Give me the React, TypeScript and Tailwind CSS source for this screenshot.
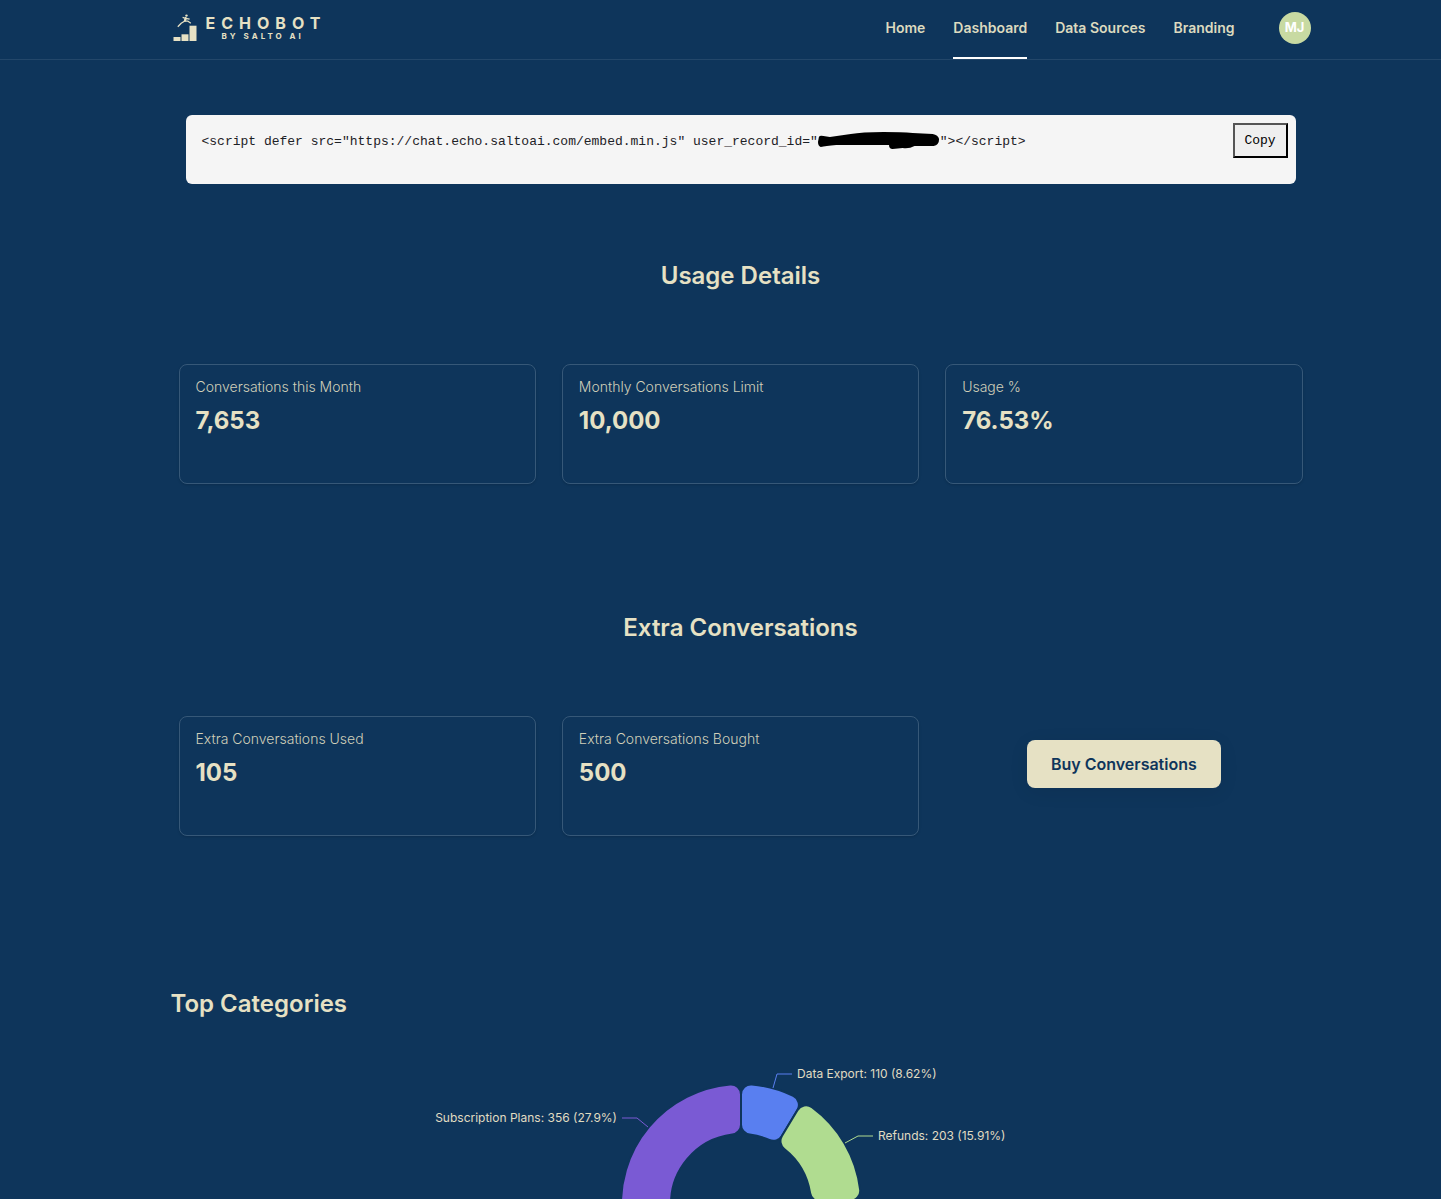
import React from "react";

type Slice = { color: string; start: number; end: number };
type Callout = {
  text: string;
  color: string;
  line: string;
  x: number;
  y: number;
  anchor: "start" | "end";
};

const OUTER = 120;
const INNER = 70;
const CORNER = 10;

const slices: Slice[] = [
  { color: "#597ff0", start: 0, end: 31.03 },
  { color: "#b0dc90", start: 31.03, end: 88.3 },
  { color: "#7a5ad4", start: 259.56, end: 360 },
];

const callouts: Callout[] = [
  { text: "Data Export: 110 (8.62%)", color: "#597ff0", line: "32,-116 36,-130 51,-130", x: 56, y: -126, anchor: "start" },
  { text: "Refunds: 203 (15.91%)", color: "#b0dc90", line: "104,-61 117,-68 132,-68", x: 137, y: -64, anchor: "start" },
  { text: "Subscription Plans: 356 (27.9%)", color: "#7a5ad4", line: "-93,-77 -104,-86 -119,-86", x: -124, y: -82, anchor: "end" },
];

function point(radius: number, angle: number) {
  return `${radius * Math.sin(angle)} ${-radius * Math.cos(angle)}`;
}

function slicePath({ start, end }: Slice) {
  const a = (start * Math.PI) / 180;
  const b = (end * Math.PI) / 180;
  const outerTurn = Math.asin(CORNER / (OUTER - CORNER));
  const innerTurn = Math.asin(CORNER / (INNER + CORNER));
  const outerSide = Math.sqrt((OUTER - CORNER) ** 2 - CORNER ** 2);
  const innerSide = Math.sqrt((INNER + CORNER) ** 2 - CORNER ** 2);
  const corner = `A${CORNER} ${CORNER} 0 0 1`;
  return [
    `M${point(innerSide, a)}`,
    `L${point(outerSide, a)}`,
    `${corner} ${point(OUTER, a + outerTurn)}`,
    `A${OUTER} ${OUTER} 0 0 1 ${point(OUTER, b - outerTurn)}`,
    `${corner} ${point(outerSide, b)}`,
    `L${point(innerSide, b)}`,
    `${corner} ${point(INNER, b - innerTurn)}`,
    `A${INNER} ${INNER} 0 0 0 ${point(INNER, a + innerTurn)}`,
    `${corner} ${point(innerSide, a)}Z`,
  ].join(" ");
}

function Logo() {
  return (
    <a href="#home" aria-label="Echobot by Salto AI" className="flex items-start gap-[7px] text-[#e6e1c4]">
      <svg width="28" height="32" viewBox="0 0 28 32" fill="currentColor" aria-hidden="true">
        <rect x="2.5" y="27" width="7" height="4" />
        <rect x="10.5" y="24.3" width="7" height="6.7" />
        <rect x="18.5" y="15.7" width="7" height="15.3" />
        <circle cx="15.5" cy="5.6" r="1.2" />
        <path
          d="M11.6 7.4 14.6 8.4 18.6 9.2M15 7 13.4 11.2 10.2 13.2 6.8 16.7M13.4 11.2 17 11.2 19.8 13.2"
          fill="none"
          stroke="currentColor"
          strokeWidth="1.3"
          strokeLinejoin="round"
        />
        <path d="M14 7.2 16 8 14.8 11.6 12.6 11.6Z" />
      </svg>
      <span className="flex flex-col pt-[5px]">
        <span className="text-[16px] leading-[17px] font-bold tracking-[6px]">ECHOBOT</span>
        <span className="pl-4 text-[8px] leading-[9px] font-bold tracking-[3px]">BY SALTO AI</span>
      </span>
    </a>
  );
}

function NavLink({ label, active = false }: { label: string; active?: boolean }) {
  return (
    <a
      href="#nav"
      aria-current={active ? "page" : undefined}
      className={`flex h-[59px] border-b-2 pt-[18px] text-[14px] leading-5 font-semibold text-[#dcdabf] ${active ? "border-white" : "border-transparent"}`}
    >
      {label}
    </a>
  );
}

function StatCard({ label, value }: { label: string; value: string }) {
  return (
    <div className="h-[120px] rounded-lg border border-[#365878] px-4 pt-3 shadow-sm">
      <p className="text-sm font-light text-[#d0cfb9]">{label}</p>
      <p className="mt-2 text-2xl font-bold text-[#e6e1c4]">{value}</p>
    </div>
  );
}

function Redaction() {
  return (
    <svg width="122" height="18" viewBox="0 0 134 18" preserveAspectRatio="none" className="inline-block overflow-visible align-middle" aria-hidden="true">
      <path d="M1 4Q2 2 6 3L13 4 36 1Q48 -1 72 -1 92 -1 104 0L126 1Q132 2 133 6 133 12 127 13L106 13Q100 16 93 15L82 16Q78 16 78 12L20 12Q8 13 3 14 0 13 0 9Z" />
    </svg>
  );
}

export default function App() {
  return (
    <div className="flex h-screen flex-col overflow-hidden bg-[#0e355b] font-['Inter',sans-serif] text-[#e6e1c4]">
      <header className="shrink-0 border-b border-[#23476a]">
        <div className="mx-auto flex h-[59px] max-w-[1180px] items-start justify-between pl-10">
          <div className="pt-[10px]">
            <Logo />
          </div>
          <nav className="flex items-start gap-7">
            <NavLink label="Home" />
            <NavLink label="Dashboard" active />
            <NavLink label="Data Sources" />
            <NavLink label="Branding" />
            <button className="mt-3 ml-4 size-8 rounded-full bg-[#c8daa2] text-[13px] font-bold text-white">MJ</button>
          </nav>
        </div>
      </header>

      <main className="mx-auto flex min-h-0 w-full max-w-[1180px] flex-1 flex-col pl-10">
        <div className="relative mx-[15px] mt-[55px] h-[69px] shrink-0 rounded-md bg-[#f5f5f5] px-4 pt-[17px] font-['Liberation_Mono',monospace] text-[13px] leading-5 text-[#1d2126]">
          <code className="block font-['Liberation_Mono',monospace] whitespace-nowrap">
            {'<script defer src="https://chat.echo.saltoai.com/embed.min.js" user_record_id="'}
            <Redaction />
            {'"></script>'}
          </code>
          <button className="absolute top-2 right-2 h-[35px] w-[55px] border-2 border-t-[#555] border-r-black border-b-black border-l-[#555] bg-[#efefef] text-[13px] text-black">
            Copy
          </button>
        </div>

        <h2 className="mt-[76px] text-center text-2xl font-semibold">Usage Details</h2>
        <section className="mt-[72px] grid shrink-0 grid-cols-3 gap-[26px] px-2">
          <StatCard label="Conversations this Month" value="7,653" />
          <StatCard label="Monthly Conversations Limit" value="10,000" />
          <StatCard label="Usage %" value="76.53%" />
        </section>

        <h2 className="mt-32 text-center text-2xl font-semibold">Extra Conversations</h2>
        <section className="mt-[72px] grid shrink-0 grid-cols-3 gap-[26px] px-2">
          <StatCard label="Extra Conversations Used" value="105" />
          <StatCard label="Extra Conversations Bought" value="500" />
          <button className="mt-6 h-12 self-start justify-self-center rounded-lg bg-[#e6e1c4] px-6 text-base font-semibold text-[#0e355b] shadow-[0_4px_20px_rgba(0,0,0,0.07)]">
            Buy Conversations
          </button>
        </section>

        <h2 className="mt-[152px] text-2xl font-semibold">Top Categories</h2>
        <div className="mt-6 flex min-h-0 flex-1 justify-center overflow-hidden">
          <svg width="720" height="320" viewBox="-360 -160 720 320" className="shrink-0" role="img" aria-label="Top categories">
            {slices.map((slice) => (
              <path key={slice.color} d={slicePath(slice)} fill={slice.color} stroke="#0e355b" strokeWidth="2" />
            ))}
            {callouts.map((c) => (
              <g key={c.text}>
                <polyline points={c.line} fill="none" stroke={c.color} />
                <text x={c.x} y={c.y} textAnchor={c.anchor} fill="#e0dcc2" className="text-xs">
                  {c.text}
                </text>
              </g>
            ))}
          </svg>
        </div>
      </main>
    </div>
  );
}
